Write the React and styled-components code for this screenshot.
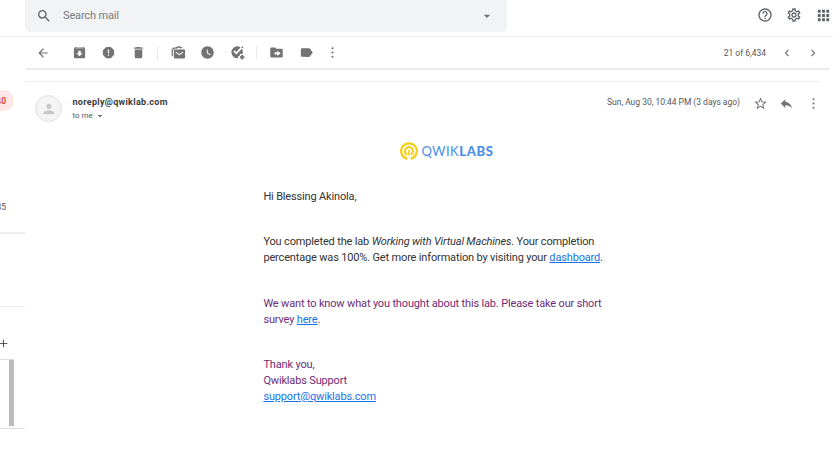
import React from "react";
import styled, { createGlobalStyle } from "styled-components";
import {
  MdSearch, MdArrowDropDown, MdHelpOutline, MdOutlineSettings, MdApps, MdArrowBack, MdReport,
  MdDelete, MdWatchLater, MdLabel, MdChevronLeft, MdChevronRight,
  MdStarBorder, MdReply, MdPerson, MdAdd,
} from "react-icons/md";

const Global = createGlobalStyle`
  * { box-sizing: border-box; }
  html, body { margin: 0; background: #fff; overflow: hidden; }
  body { font-family: Roboto, "Liberation Sans", sans-serif; color: #222; }
`;
const Page = styled.div`width: 833px; height: 451px; display: flex; flex-direction: column; overflow: hidden; background: #fff;`;
const Header = styled.header`height: 37px; flex: none; display: flex; padding-left: 25px; border-bottom: 1px solid #eeeff0;`;
const SearchBox = styled.div`
  width: 482px; height: 32px; padding: 0 12px 1px 11px; display: flex; align-items: center;
  background: #f1f3f4; border-radius: 0 0 5px 5px; color: #5f6368;
`;
const Placeholder = styled.span`flex: 1; margin-left: 11px; font-size: 11px; line-height: 14px; letter-spacing: -0.15px; color: #777b7f;`;
const Icon = styled.span`
  display: flex; flex: none; width: ${(p) => p.$size || 15}px; height: ${(p) => p.$size || 15}px;
  margin-left: ${(p) => p.$gap || 0}px; color: ${(p) => p.$color || "#737373"};
  svg { width: 100%; height: 100%; display: block; }
`;
const HeaderActions = styled.div`display: flex; align-items: center; height: 30px; padding-left: 249px;`;
const Columns = styled.div`flex: 1; display: flex; min-height: 0;`;
const Sidebar = styled.aside`width: 25px; flex: none; display: flex; flex-direction: column; overflow: hidden;`;
const InboxRow = styled.div`
  width: 14px; height: 21px; margin-top: 53px; padding-right: 8px; display: flex; align-items: center; justify-content: flex-end;
  background: #fce8e6; border-radius: 0 11px 11px 0; color: #d93025; font-size: 8.5px; font-weight: 500;
`;
const Count = styled.div`width: 6px; height: 12px; margin-top: 90px; display: flex; justify-content: flex-end; font-size: 8.5px; line-height: 12px; color: #555;`;
const Rule = styled.div`flex: none; width: ${(p) => p.$width || 25}px; height: ${(p) => p.$height || 1}px; margin-top: ${(p) => p.$top || 0}px; background: ${(p) => p.$color || "#eee"};`;
const AddRow = styled.div`height: 12px; margin: 30px 0 0 -3px; display: flex;`;
const Scroller = styled.div`width: 14px; height: 66px; display: flex; justify-content: flex-end;`;
const Thumb = styled.div`width: 5px; height: 66px; background: #bcbcbc;`;
const Main = styled.main`flex: 1; min-width: 0; display: flex; flex-direction: column;`;
const Toolbar = styled.div`
  width: 805px; height: 33px; flex: none; padding: 0 10.5px 0 10.6px; display: flex; align-items: center;
  border-bottom: 2px solid #ececec; border-radius: 0 0 2px 2px;
`;
const Separator = styled.i`width: 1px; height: 13px; margin-left: ${(p) => p.$gap}px; background: #e8e8e8;`;
const Pager = styled.div`margin-left: auto; display: flex; align-items: center;`;
const SmallText = styled.span`font-size: ${(p) => p.$size || 8.5}px; line-height: 12px; letter-spacing: ${(p) => p.$track || 0}px; color: #55585c; white-space: nowrap;`;
const MessageHead = styled.div`width: 795px; height: 46px; flex: none; display: flex; padding: 13px 0 0 10px;`;
const Avatar = styled.div`width: 27px; height: 27px; display: grid; place-items: center; border-radius: 50%; border: 1px solid #e1e1e1; background: #f4f4f4;`;
const Sender = styled.div`margin-left: 10.5px; padding-top: 1px; display: flex; flex-direction: column;`;
const SenderName = styled.strong`font-size: 9px; line-height: 12px; font-weight: 700; letter-spacing: 0.3px; color: #3b3b3b;`;
const Recipient = styled.div`display: flex; align-items: center; height: 15px;`;
const Meta = styled.div`margin-left: auto; height: 14px; display: flex; align-items: center; margin-right: -1px;`;
const MetaActions = styled.div`display: flex; padding-top: 2px;`;
const Letter = styled.article`width: 366px; margin-left: 238.4px; display: flex; flex-direction: column; font-size: 11px; line-height: 16px; color: #222;`;
const Brand = styled.div`height: 18px; margin: 14px 0 0 136.6px; display: flex; align-items: center; svg { width: 18px; height: 18px; flex: none; }`;
const Wordmark = styled.span`margin-left: 3.4px; font: 400 13px/18px Lato, sans-serif; letter-spacing: 0.45px; color: #4a8eea; b { font-weight: 900; letter-spacing: 0.7px; }`;
const Paragraph = styled.p`margin: ${(p) => p.$top}px 0 0; white-space: nowrap; letter-spacing: -0.16px; color: ${(p) => (p.$visited ? "#6e2c78" : "#333")};`;
const Link = styled.a`color: #1a73e8; text-decoration: underline;`;

const Glyph = ({ d }) => <svg viewBox="0 0 24 24" fill="currentColor"><path fillRule="evenodd" d={d} /></svg>;
const archive = "M5 3h14l2 3v13a2 2 0 0 1-2 2H5a2 2 0 0 1-2-2V6zM5.500 5h13l-.8-1H6.300zM10 9v4H7l5 5 5-5h-3V9z";
const unread = "M6 7h15a1.500 1.500 0 0 1 1.500 1.500V20a1.500 1.500 0 0 1-1.500 1.500H6A1.500 1.500 0 0 1 4.500 20V8.500A1.500 1.500 0 0 1 6 7zM7.500 10.500v2l6 4 6-4v-2l-6 4zM1 18V7l3-3h3l4-2h3l4 2v1.300h-4l-2-1.200-3 1.700H5L3 8v10z";
const task = "M11 2c2.200 0 4.200.7 5.800 1.900L10 11 7.500 8.500 5.500 10.500 10 15l9-9.200A9.500 9.500 0 0 1 20.500 12c0 .9-.1 1.700-.3 2.500h-4.700v3h-2.500v3.800A9.700 9.700 0 1 1 11 2zM18 4l2-2 1.500 1.500-2 2zM18 16h3v2h2v3h-2v2h-3v-2h-2v-3h2z";
const move = "M4 4h6l2 2h8a2 2 0 0 1 2 2v10a2 2 0 0 1-2 2H4a2 2 0 0 1-2-2V6a2 2 0 0 1 2-2zM13.500 9v2.500H9v3.500h4.500v2.500l5-4.250z";

function QwikMark() {
  return (
    <svg viewBox="0 0 18 18" fill="none" stroke="#f4cf1c">
      <path d="M7.300 16.700A7.800 7.800 0 1 1 10.700 16.700" strokeWidth="2.300" />
      <path d="M7.200 12.700A4 4 0 1 1 10.800 12.700" strokeWidth="2.200" />
      <path d="M9 7.800V13.500" strokeWidth="1.700" />
    </svg>
  );
}

function MoreDots() {
  return (
    <svg viewBox="0 0 15 15" fill="currentColor">
      <circle cx="7.500" cy="3.300" r="1.050" /><circle cx="7.500" cy="7.500" r="1.050" /><circle cx="7.500" cy="11.700" r="1.050" />
    </svg>
  );
}

export default function App() {
  return (
    <Page>
      <Global />
      <Header>
        <SearchBox>
          <Icon $size={16} $color="#5f6368"><MdSearch /></Icon>
          <Placeholder>Search mail</Placeholder>
          <Icon $size={16}><MdArrowDropDown /></Icon>
        </SearchBox>
        <HeaderActions>
          <Icon $size={16} $color="#5f6368" $gap={1}><MdHelpOutline /></Icon>
          <Icon $size={16} $color="#5f6368" $gap={13}><MdOutlineSettings /></Icon>
          <Icon $color="#5f6368" $size={17} $gap={12.5}><MdApps /></Icon>
        </HeaderActions>
      </Header>
      <Columns>
        <Sidebar>
          <InboxRow>40</InboxRow>
          <Count>35</Count>
          <Rule $top={19} $height={2} />
          <Rule $top={72} />
          <AddRow><Icon $size={13} $color="#555"><MdAdd /></Icon></AddRow>
          <Rule $top={10} $width={14} $color="#ddd" />
          <Scroller><Thumb /></Scroller>
          <Rule $top={2} $color="#ddd" />
        </Sidebar>
        <Main>
          <Toolbar>
            <Icon $size={14}><MdArrowBack /></Icon>
            <Icon $gap={22.5}><Glyph d={archive} /></Icon>
            <Icon $gap={14}><MdReport /></Icon>
            <Icon $gap={15}><MdDelete /></Icon>
            <Separator $gap={10.5} />
            <Icon $gap={13.5}><Glyph d={unread} /></Icon>
            <Icon $gap={13.5}><MdWatchLater /></Icon>
            <Icon $gap={15}><Glyph d={task} /></Icon>
            <Separator $gap={11} />
            <Icon $gap={12}><Glyph d={move} /></Icon>
            <Icon $gap={15}><MdLabel /></Icon>
            <Icon $gap={11}><MoreDots /></Icon>
            <Pager>
              <SmallText>21 of 6,434</SmallText>
              <Icon $gap={13.5} $size={14}><MdChevronLeft /></Icon>
              <Icon $gap={12} $size={14}><MdChevronRight /></Icon>
            </Pager>
          </Toolbar>
          <Rule $top={11} $width={795} />
          <MessageHead>
            <Avatar><Icon $size={16} $color="#c8c8c8"><MdPerson /></Icon></Avatar>
            <Sender>
              <SenderName>noreply@qwiklab.com</SenderName>
              <Recipient><SmallText $size={8}>to me</SmallText><Icon $size={12} $gap={1.5}><MdArrowDropDown /></Icon></Recipient>
            </Sender>
            <Meta>
              <SmallText $track={-0.02}>Sun, Aug 30, 10:44 PM (3 days ago)</SmallText>
              <MetaActions>
                <Icon $gap={13}><MdStarBorder /></Icon>
                <Icon $gap={11}><MdReply /></Icon>
                <Icon $gap={12}><MoreDots /></Icon>
              </MetaActions>
            </Meta>
          </MessageHead>
          <Letter>
            <Brand><QwikMark /><Wordmark>QWIK<b>LABS</b></Wordmark></Brand>
            <Paragraph $top={29}>Hi Blessing Akinola,</Paragraph>
            <Paragraph $top={29}>You completed the lab <em>Working with Virtual Machines</em>. Your completion<br />percentage was 100%. Get more information by visiting your <Link>dashboard</Link>.</Paragraph>
            <Paragraph $top={30} $visited>We want to know what you thought about this lab. Please take our short<br />survey <Link>here</Link>.</Paragraph>
            <Paragraph $top={29} $visited>Thank you,<br />Qwiklabs Support<br /><Link>support@qwiklabs.com</Link></Paragraph>
          </Letter>
        </Main>
      </Columns>
    </Page>
  );
}
